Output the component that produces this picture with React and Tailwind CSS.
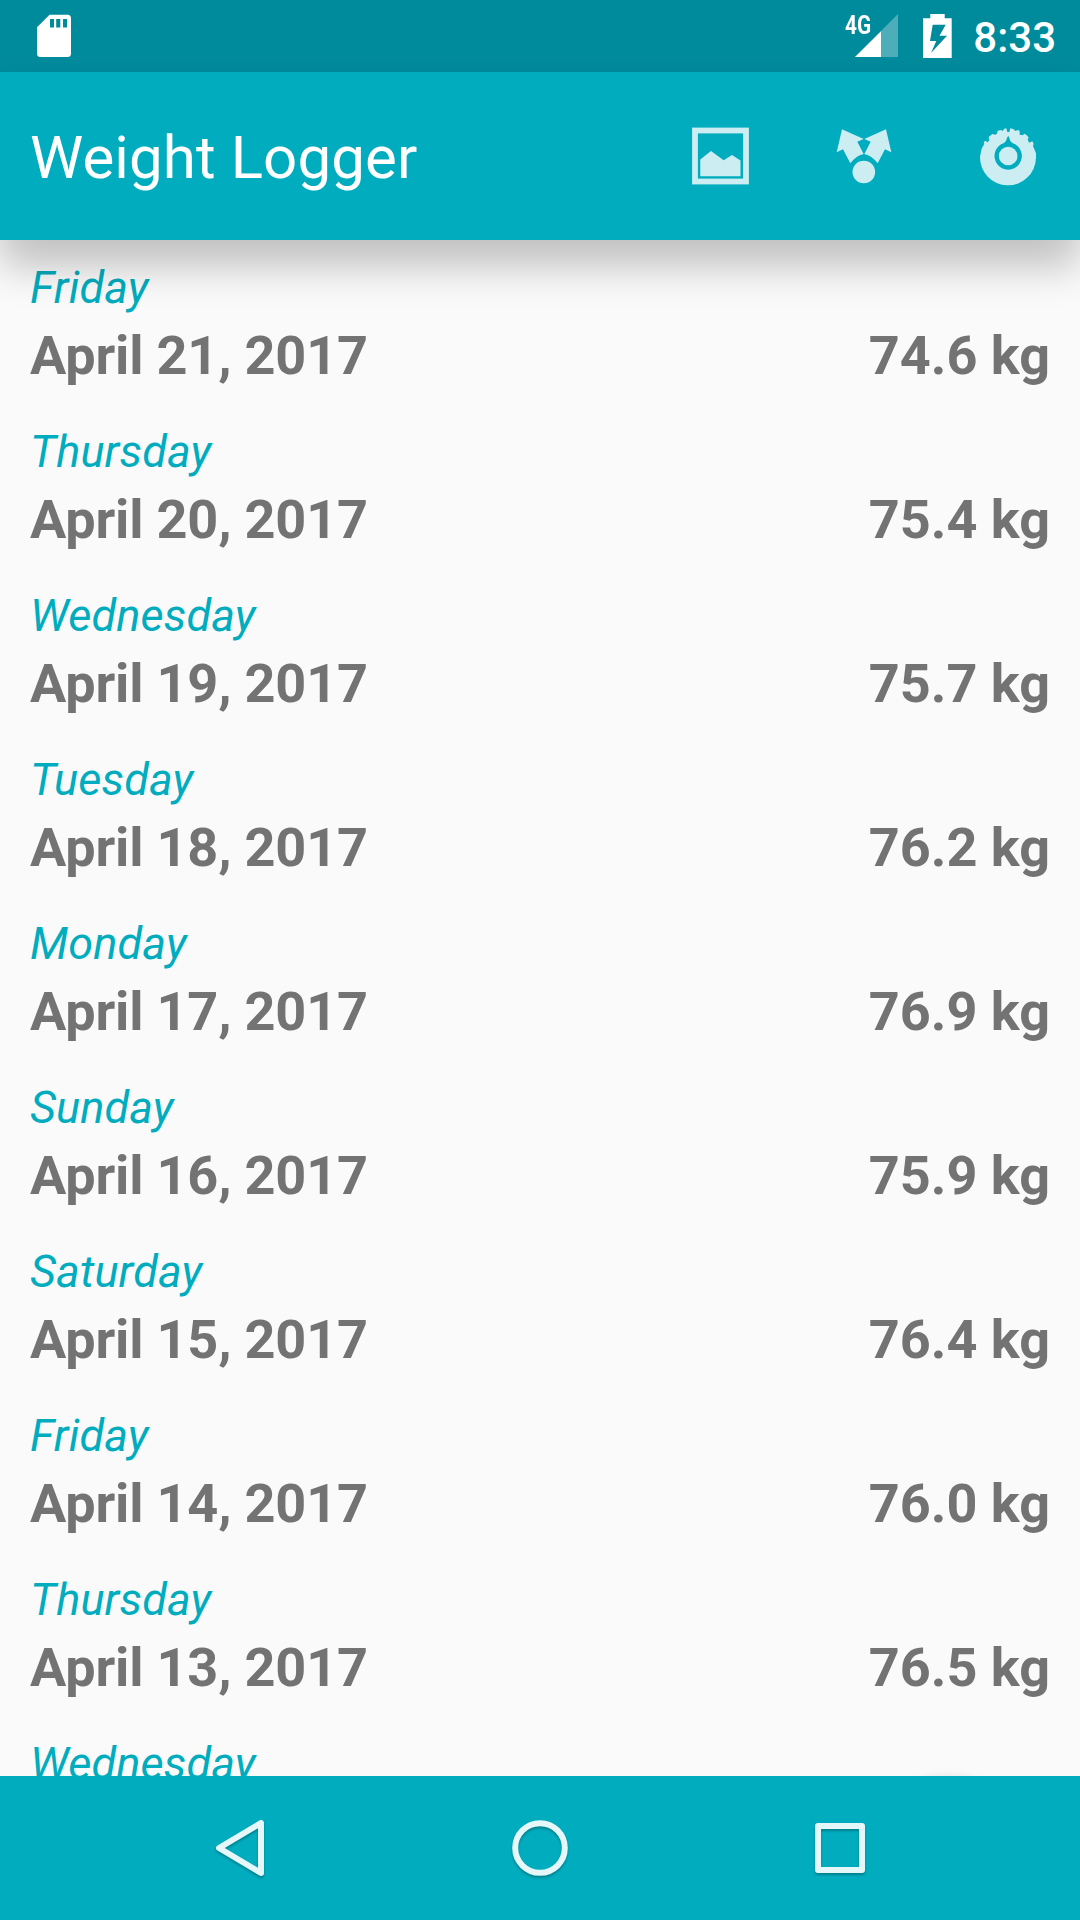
import React from 'react';

const entries = [
    { day: 'Friday', date: 'April 21, 2017', weight: '74.6 kg' },
    { day: 'Thursday', date: 'April 20, 2017', weight: '75.4 kg' },
    { day: 'Wednesday', date: 'April 19, 2017', weight: '75.7 kg' },
    { day: 'Tuesday', date: 'April 18, 2017', weight: '76.2 kg' },
    { day: 'Monday', date: 'April 17, 2017', weight: '76.9 kg' },
    { day: 'Sunday', date: 'April 16, 2017', weight: '75.9 kg' },
    { day: 'Saturday', date: 'April 15, 2017', weight: '76.4 kg' },
    { day: 'Friday', date: 'April 14, 2017', weight: '76.0 kg' },
    { day: 'Thursday', date: 'April 13, 2017', weight: '76.5 kg' },
    { day: 'Wednesday' },
];

const StatusBar = () => (
    <div className="flex h-[72px] shrink-0 items-center bg-[#008b9c] pl-9 pr-6 text-white">
        {/* SD card */}
        <svg className="h-[72px] w-9" viewBox="0 0 36 72" fill="currentColor">
            <path
                fillRule="evenodd"
                d="M13.5 14.7H31.5Q35 14.7 35 18.2V53.5Q35 57 31.5 57H4.5Q1 57 1 53.5V27.2ZM14 19V27.5H18V19ZM20.2 19V27.5H24.3V19ZM27 19V27.5H31V19Z"
            />
        </svg>

        <div className="ml-auto flex items-center">
            {/* Mobile signal */}
            <div className="relative">
                <svg className="h-[72px] w-14" viewBox="0 0 56 72" fill="currentColor">
                    <path d="M53 14V57H10Z" opacity="0.3" />
                    <path d="M36 31.2V57H10Z" />
                </svg>
                <span className="absolute top-[10px] left-0 origin-left scale-x-[.8] text-[26px] leading-[30px] font-bold">4G</span>
            </div>
            {/* Battery, charging */}
            <svg className="ml-[22px] h-[72px] w-[29px]" viewBox="0 0 29 72" fill="currentColor">
                <path
                    fillRule="evenodd"
                    d="M7.3 14H21.7V18.3H28.7V58H0V18.3H7.3ZM9.7 24.8L7 41H13.3L8 53L24 35.7H16.5L22.7 24.8Z"
                />
            </svg>
            <span className="ml-[21px] pt-1 text-[42px] leading-[50px] font-medium">8:33</span>
        </div>
    </div>
);

const GalleryIcon = () => (
    <svg className="h-[168px] w-36" viewBox="0 0 144 168">
        <rect x="47" y="58.5" width="51" height="51" fill="none" stroke="#ccedf2" strokeWidth="5.8" />
        <path d="M52.3 87.5L63 79L75.7 88.3L84 83L92.5 88.5V104.3H52.3Z" fill="#ccedf2" />
    </svg>
);

const ShareIcon = () => (
    <svg className="h-[168px] w-36" viewBox="0 0 144 168">
        <g transform="translate(18 38) scale(.3333)" fill="#ccedf2">
            <path d="M96 58L161 87L142 95L161 132Q137 138 121 160L99 118L80 127Z" />
            <path d="M228 58L163 87L182 95L163 132Q187 138 203 160L225 118L244 127Z" />
            <circle cx="161.500" cy="186" r="34" />
        </g>
    </svg>
);

const SettingsIcon = () => (
    <svg className="h-[168px] w-36" viewBox="0 0 144 168">
        <g transform="translate(24 38) scale(.3333)">
            <path
                fill="#ccedf2"
                fillRule="evenodd"
                d="M133 56L139 55L142 66H148L151 55L157 56L163 59L166 63L174 60L179 63V74L188 76L194 71L202 77L206 83L203 88L207 98L217 94L221 101L219 108L228 130V144A84 84 0 0 1 60 140L65 116L73 101L71 97L76 92L83 97L88 91L86 81L97 72L106 74L111 71L113 62L123 60L128 63ZM144.500 77Q140 84 138 93L132 99A41 41 0 1 0 157 99L151 93Q149 84 144.500 77Z"
            />
            <circle cx="144.500" cy="138" r="28" fill="#ccedf2" />
        </g>
    </svg>
);

const Toolbar = () => (
    <header className="relative z-10 flex h-[168px] shrink-0 items-center bg-[#00acbe] pl-[30px] shadow-[0_26px_38px_rgba(0,0,0,0.23)]">
        <h1 className="flex-1 pt-1 text-[60px] leading-[70px] tracking-[0.1px] text-white">Weight Logger</h1>
        <GalleryIcon />
        <ShareIcon />
        <SettingsIcon />
    </header>
);

const Entry = ({ entry }) => (
    <li className="h-[164px] px-[30px] pt-[21px]">
        <div className="text-[45px] leading-[53px] tracking-[0.15px] text-[#00acbe] italic">{entry.day}</div>
        {entry.date && (
            <div className="mt-[10px] flex justify-between text-[54px] leading-[63px] font-bold text-[#737373]">
                <span className="tracking-[-0.17px]">{entry.date}</span>
                <span>{entry.weight}</span>
            </div>
        )}
    </li>
);

const NavBar = () => (
    <nav className="relative z-10 flex h-36 shrink-0 items-center justify-center bg-[#00acbe]">
        <div className="flex w-[300px] justify-center">
            <svg className="h-16 w-16 drop-shadow-[0_2px_1px_rgba(0,0,0,0.25)]" viewBox="0 0 64 64" fill="none" stroke="#e5f7f8" strokeWidth="6" strokeLinejoin="round">
                <path d="M53 7V57L11 32Z" />
            </svg>
        </div>
        <div className="flex w-[300px] justify-center">
            <svg className="h-16 w-16 drop-shadow-[0_2px_1px_rgba(0,0,0,0.25)]" viewBox="0 0 64 64" fill="none" stroke="#e5f7f8" strokeWidth="6">
                <circle cx="32" cy="32" r="24.800" />
            </svg>
        </div>
        <div className="flex w-[300px] justify-center">
            <svg className="h-16 w-16 drop-shadow-[0_2px_1px_rgba(0,0,0,0.25)]" viewBox="0 0 64 64" fill="none" stroke="#e5f7f8" strokeWidth="6" strokeLinejoin="round">
                <rect x="10" y="10" width="44" height="44" />
            </svg>
        </div>
    </nav>
);

const App = () => {
    return (
        <div className="flex h-[1920px] w-[1080px] flex-col overflow-hidden bg-[#fafafa] font-['Roboto',sans-serif]">
            <StatusBar />
            <Toolbar />
            <main className="relative min-h-0 flex-1 overflow-hidden">
                <ul>
                    {entries.map((entry, index) => (
                        <Entry key={index} entry={entry} />
                    ))}
                </ul>
                {/* Add button, slid down out of view */}
                <div className="absolute top-full right-12 h-[168px] w-[168px] rounded-full shadow-[0_0_10px_rgba(0,0,0,0.09)]" />
            </main>
            <NavBar />
        </div>
    );
};

export default App;
